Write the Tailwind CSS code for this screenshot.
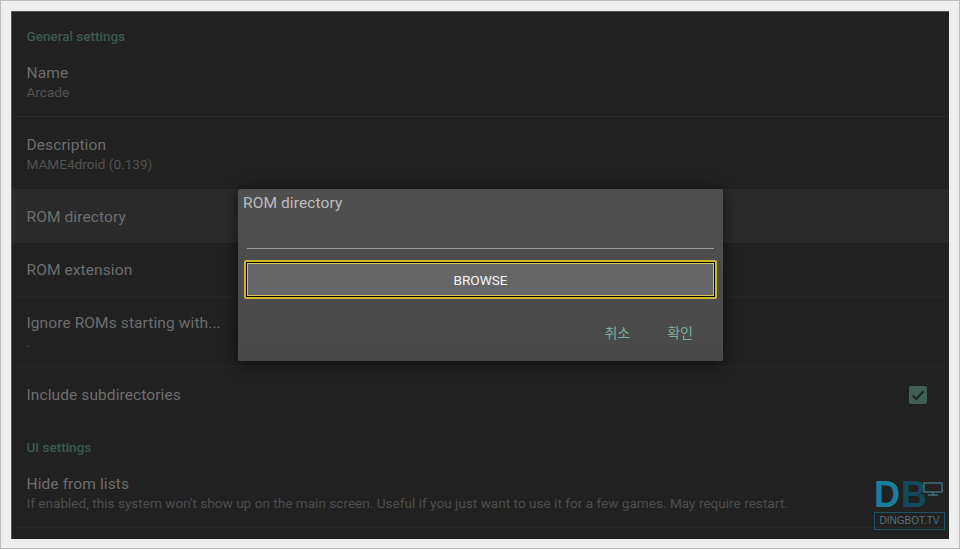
<!DOCTYPE html>
<html lang="ko">
<head>
    <meta charset="UTF-8">
    <title>ROM directory</title>
    <script src="https://cdn.jsdelivr.net/npm/@tailwindcss/browser@4"></script>
</head>
<body class="bg-[#eeeeee] font-['Roboto','Noto_Sans_CJK_KR',sans-serif]">
    <!-- Screenshot frame -->
    <div class="relative w-[960px] h-[549px] overflow-hidden border border-[#bdbdbd] pt-[10px] pb-[10px] px-[10px]">
        <div class="relative h-[528px] w-[938px] bg-[#212121] border-t border-l border-[#555] overflow-hidden text-[#6f6f6f]">

            <!-- General settings -->
            <div class="h-[41px] pl-[14.5px] pt-[15px] text-[13.5px] leading-[18px] font-medium text-[#3c5a4e]">General settings</div>

            <div class="h-[64px] pl-[14.5px] pt-[10px] border-b border-[#2a2a2a]">
                <div class="text-[15.5px] leading-[20px] tracking-[0.1px] text-[#6e6e6e]">Name</div>
                <div class="text-[13.6px] leading-[18px] text-[#525252]">Arcade</div>
            </div>
            <div class="h-[72px] pl-[14.5px] pt-[18px]">
                <div class="text-[15.5px] leading-[20px] tracking-[0.1px] text-[#6e6e6e]">Description</div>
                <div class="text-[13.6px] leading-[18px] text-[#525252]">MAME4droid (0.139)</div>
            </div>
            <div class="h-[54px] pl-[14.5px] pt-[3px] flex items-center bg-[#2a2a2a] text-[15.5px] tracking-[0.1px] text-[#6e6e6e]">ROM directory</div>
            <div class="h-[54px] pl-[14.5px] pt-[2px] flex items-center border-b border-[#262626] text-[15.5px] tracking-[0.1px] text-[#6e6e6e]">ROM extension</div>
            <div class="h-[70px] pl-[14.5px] pt-[16px] border-b border-[#262626]">
                <div class="text-[15.5px] leading-[20px] tracking-[0.1px] text-[#6e6e6e]">Ignore ROMs starting with...</div>
                <div class="text-[13.6px] leading-[18px] text-[#525252]">.</div>
            </div>
            <div class="h-[56px] pl-[14.5px] pr-[22px] pt-[2px] flex items-center justify-between text-[15.5px] tracking-[0.1px] text-[#6e6e6e]">
                <span>Include subdirectories</span>
                <span class="w-[18px] h-[18px] mt-[-2px] rounded-[2px] bg-[#3f5f54] flex items-center justify-center">
                    <svg width="14" height="14" viewBox="0 0 14 14" fill="none" stroke="#1c2522" stroke-width="2"><path d="M1.5 7.5 L5.2 11 L12.5 3.2"/></svg>
                </span>
            </div>

            <!-- UI settings -->
            <div class="h-[41px] pl-[14.5px] pt-[15px] text-[13.5px] leading-[18px] font-medium text-[#3c5a4e]">UI settings</div>
            <div class="h-[64px] pl-[14.5px] pt-[10px] border-b border-[#282828]">
                <div class="text-[15.5px] leading-[20px] tracking-[0.1px] text-[#6e6e6e]">Hide from lists</div>
                <div class="text-[13.6px] leading-[18px] text-[#4e4e4e]">If enabled, this system won't show up on the main screen. Useful if you just want to use it for a few games. May require restart.</div>
            </div>

            <!-- Watermark logo -->
            <div class="absolute left-[862px] top-[468px] w-[72px] h-[52px]">
                <div class="flex items-start h-[31px]">
                    <span class="font-['Liberation_Sans',sans-serif] font-bold text-[36px] leading-[30px] w-[27px] text-[#1a7f9c]">D</span>
                    <span class="font-['Liberation_Sans',sans-serif] font-bold text-[36px] leading-[30px] w-[22px] text-[#12495b]">B</span>
                    <svg class="mt-[2px]" width="20" height="14" viewBox="0 0 20 14" fill="none" stroke="#3f6f7d" stroke-width="1.5"><rect x="1" y="1" width="18" height="9"/><path d="M5 13h10M10 10v3"/></svg>
                </div>
                <div class="mt-[1px] h-[18px] w-[71px] border border-[#1f5363] text-[10px] leading-[16px] text-center text-[#55747d] font-['Liberation_Sans',sans-serif]">DINGBOT.TV</div>
            </div>
        </div>

        <!-- Dialog -->
        <div class="absolute left-[237px] top-[188px] w-[485px] h-[172px] rounded-[2px] bg-gradient-to-b from-[#4f4f4f] to-[#494949] shadow-[0_2px_14px_rgba(0,0,0,0.6)] px-[5px]">
            <div class="h-[27px] pt-[4px] text-[15.5px] leading-[20px] tracking-[0.1px] text-[#bdbdbd]">ROM directory</div>
            <div class="mx-[4px] mt-[32px] h-[1px] bg-[#9a9a9a]"></div>
            <button class="block mt-[11px] ml-[1px] w-[473px] h-[39px] rounded-[2px] border-2 border-[#cdb52c] bg-black p-[1px]">
                <span class="flex w-full h-full pt-[1px] items-center justify-center border border-[#d8c453] bg-[#666666] text-[13.6px] font-normal text-[#f5f5f5]">BROWSE</span>
            </button>
            <div class="flex justify-end gap-[37px] pr-[25px] mt-[24px] text-[14px] leading-[20px] text-[#7fae9c]">
                <span>취소</span>
                <span>확인</span>
            </div>
        </div>
    </div>
</body>
</html>
